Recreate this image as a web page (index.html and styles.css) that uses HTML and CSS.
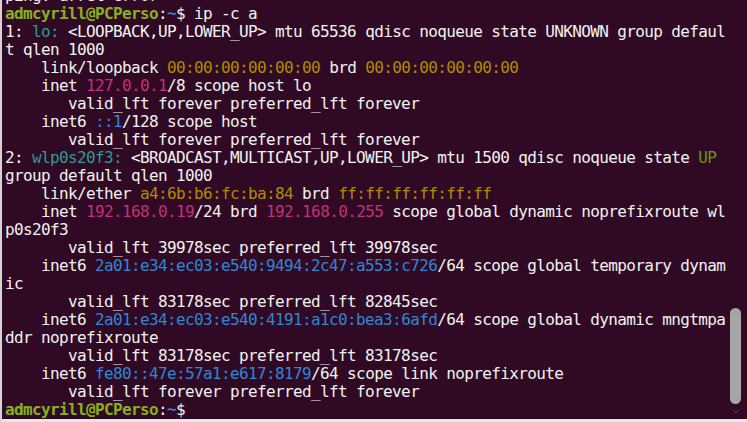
FILE: index.html
```html
<!DOCTYPE html>
<html lang="fr">
<head>
<meta charset="utf-8">
<title>Terminal</title>
<link rel="stylesheet" href="styles.css">
</head>
<body>
<div class="term">
  <div class="screen">
<pre class="out"><span class="ln">ping: arrêt error</span>
<span class="ln"><span class="pg">admcyrill@PCPerso</span>:<span class="pb">~</span>$ ip -c a</span>
<span class="ln">1: <span class="c">lo:</span> &lt;LOOPBACK,UP,LOWER_UP&gt; mtu 65536 qdisc noqueue state UNKNOWN group defaul</span>
<span class="ln">t qlen 1000</span>
<span class="ln">    link/loopback <span class="y">00:00:00:00:00:00</span> brd <span class="y">00:00:00:00:00:00</span></span>
<span class="ln">    inet <span class="m">127.0.0.1</span>/8 scope host lo</span>
<span class="ln">       valid_lft forever preferred_lft forever</span>
<span class="ln">    inet6 <span class="b">::1</span>/128 scope host</span>
<span class="ln">       valid_lft forever preferred_lft forever</span>
<span class="ln">2: <span class="c">wlp0s20f3:</span> &lt;BROADCAST,MULTICAST,UP,LOWER_UP&gt; mtu 1500 qdisc noqueue state <span class="g">UP</span></span>
<span class="ln">group default qlen 1000</span>
<span class="ln">    link/ether <span class="y">a4:6b:b6:fc:ba:84</span> brd <span class="y">ff:ff:ff:ff:ff:ff</span></span>
<span class="ln">    inet <span class="m">192.168.0.19</span>/24 brd <span class="m">192.168.0.255</span> scope global dynamic noprefixroute wl</span>
<span class="ln">p0s20f3</span>
<span class="ln">       valid_lft 39978sec preferred_lft 39978sec</span>
<span class="ln">    inet6 <span class="b">2a01:e34:ec03:e540:9494:2c47:a553:c726</span>/64 scope global temporary dynam</span>
<span class="ln">ic</span>
<span class="ln">       valid_lft 83178sec preferred_lft 82845sec</span>
<span class="ln">    inet6 <span class="b">2a01:e34:ec03:e540:4191:a1c0:bea3:6afd</span>/64 scope global dynamic mngtmpa</span>
<span class="ln">ddr noprefixroute</span>
<span class="ln">       valid_lft 83178sec preferred_lft 83178sec</span>
<span class="ln">    inet6 <span class="b">fe80::47e:57a1:e617:8179</span>/64 scope link noprefixroute</span>
<span class="ln">       valid_lft forever preferred_lft forever</span>
<span class="ln"><span class="pg">admcyrill@PCPerso</span>:<span class="pb">~</span>$ </span></pre>
  </div>
  <div class="scroll">
    <div class="thumb"></div>
    <div class="chev">
      <svg width="8" height="5" viewBox="0 0 8 5"><path d="M0.5 0.5 L4 4 L7.5 0.5" fill="none" stroke="#5a3a50" stroke-width="1"/></svg>
    </div>
  </div>
</div>
</body>
</html>
```
FILE: styles.css
```css
html, body {
  margin: 0;
  padding: 0;
  width: 747px;
  height: 422px;
  overflow: hidden;
  background: #300a24;
}

.term {
  display: flex;
  width: 747px;
  height: 422px;
  box-sizing: border-box;
  background: #300a24;
  border-left: 2px solid #d4d4d4;
  border-bottom: 3px solid #e6e6e6;
}

.screen {
  flex: 0 0 724px;
  padding-left: 3px;
  box-sizing: border-box;
  overflow: hidden;
}

.out {
  margin: -13.5px 0 0 0;
  font-family: "DejaVu Sans Mono", "Liberation Mono", monospace;
  font-size: 16px;
  letter-spacing: -0.63px;
  line-height: 18px;
  color: #f2f2f2;
  white-space: pre;
}

.ln { display: inline; }

.pg { color: #87b01e; font-weight: bold; }
.pb { color: #3d7bd0; font-weight: bold; }
.c { color: #2a9b96; }
.y { color: #b08a00; }
.m { color: #c4307a; }
.b { color: #2f86d4; }
.g { color: #5f9c0a; }

.scroll {
  flex: 0 0 11px;
  margin-left: 4px;
  display: flex;
  flex-direction: column;
  justify-content: flex-end;
  align-items: center;
}

.thumb {
  width: 11px;
  height: 96px;
  border-radius: 6px;
  background: #a6a6a6;
}

.chev {
  height: 15px;
  display: flex;
  align-items: center;
  justify-content: center;
}
```
